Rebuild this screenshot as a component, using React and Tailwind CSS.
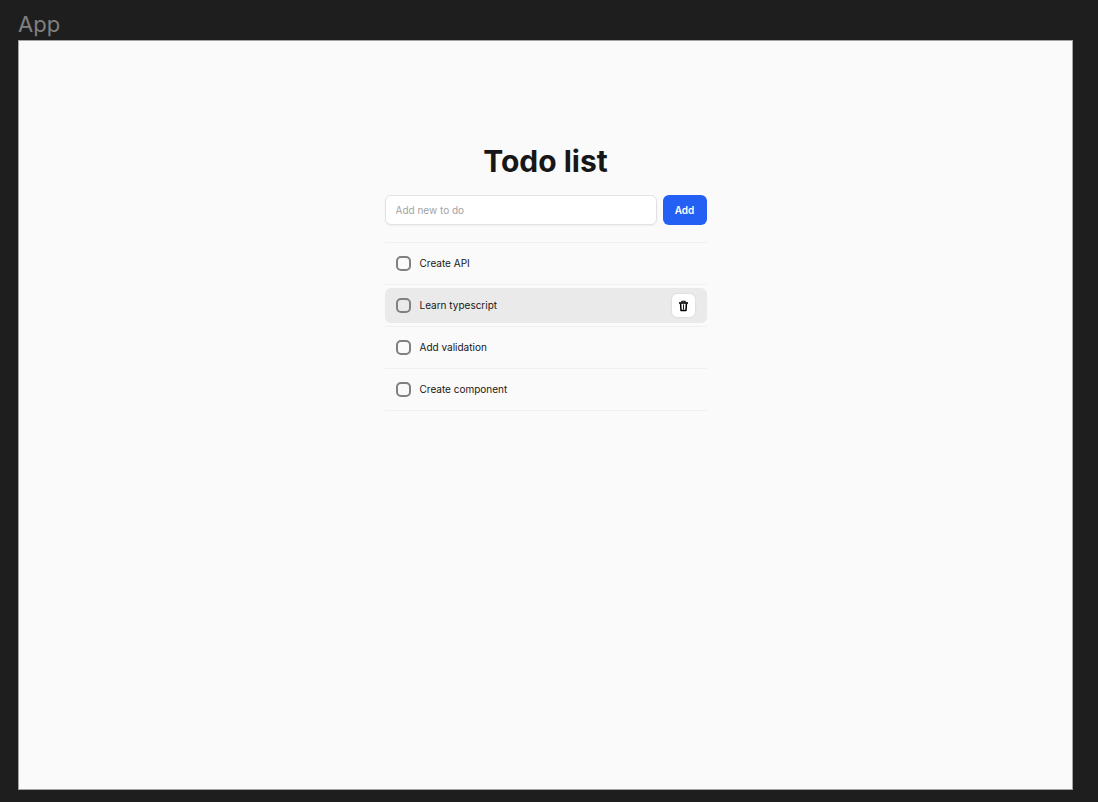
import { useState } from "react";

const initialTodos = [
  { id: 1, title: "Create API" },
  { id: 2, title: "Learn typescript", active: true },
  { id: 3, title: "Add validation" },
  { id: 4, title: "Create component" },
];

function TrashIcon() {
  return (
    <svg viewBox="0 0 11 12" className="h-3 w-[11px]" fill="none" stroke="currentColor" aria-hidden="true">
      <path d="M2.6 3.5 L3 10.4 H8 L8.4 3.5" strokeWidth="1.5" strokeLinejoin="round" />
      <path d="M1 3 H10" strokeWidth="1.6" />
      <path d="M3.8 2.6 V1.3 H7.2 V2.6" strokeWidth="1.1" strokeLinejoin="round" />
      <path d="M5.5 4.4 V9.6" strokeWidth="0.9" />
    </svg>
  );
}

function TodoItem({ todo }) {
  return (
    <li className="border-b border-[#f0f0f0] py-[3px]">
      <div
        className={
          todo.active
            ? "flex h-[35px] items-center rounded-md bg-[#eaeaea] pr-3 pl-[11px]"
            : "flex h-[35px] items-center rounded-md pr-3 pl-[11px]"
        }
      >
        <label className="flex flex-1 items-center gap-[9px]">
          <input
            type="checkbox"
            className="size-[15px] appearance-none rounded-[5px] border-2 border-[#808080] checked:bg-[#2560f5]"
          />
          <span>{todo.title}</span>
        </label>
        {todo.active && (
          <button
            type="button"
            aria-label="Delete"
            className="flex size-[23px] items-center justify-center rounded-[5px] bg-white text-black shadow-[0_0_2px_rgba(0,0,0,0.15)]"
          >
            <TrashIcon />
          </button>
        )}
      </div>
    </li>
  );
}

export default function App() {
  const [value, setValue] = useState("");
  return (
    <div className="flex min-h-screen flex-col bg-[#1e1e1e] pt-2 pr-[25px] pb-3 pl-[18px] font-['Inter',sans-serif]">
      <div className="h-8 text-[22px] leading-8 text-[#808080]">App</div>
      <main className="flex-1 border border-[#a3a3a3] bg-[#fafafa] px-4 pt-[102px] text-[10px] leading-[15px] text-[#171717]">
        <div className="mx-auto max-w-[322px]">
          <h1 className="text-center text-[30px] leading-9 font-bold">Todo list</h1>
          <form className="mt-4 flex gap-[6px]" onSubmit={(e) => e.preventDefault()}>
            <input
              type="text"
              aria-label="New to do"
              placeholder="Add new to do"
              value={value}
              onChange={(e) => setValue(e.target.value)}
              className="h-[30px] min-w-0 flex-1 rounded-md border border-[#e2e2e2] bg-white px-[10px] shadow-xs outline-none placeholder:text-[#a3a3a3]"
            />
            <button type="submit" className="h-[30px] w-11 rounded-md bg-[#2560f5] font-semibold text-white">
              Add
            </button>
          </form>
          <ul className="mt-[17px] border-t border-[#f0f0f0]">
            {initialTodos.map((todo) => (
              <TodoItem key={todo.id} todo={todo} />
            ))}
          </ul>
        </div>
      </main>
    </div>
  );
}
